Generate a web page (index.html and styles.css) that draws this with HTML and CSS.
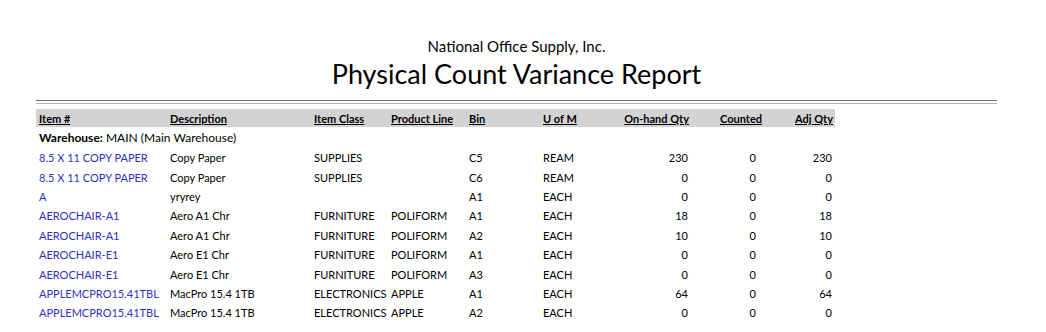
FILE: index.html
```html
<!DOCTYPE html>
<html>
<head>
<meta charset="utf-8">
<link rel="stylesheet" href="styles.css">
</head>
<body>
<div class="page">
  <div class="company">National Office Supply, Inc.</div>
  <div class="title">Physical Count Variance Report</div>
  <div class="rule1"></div>
  <div class="rule2"></div>
  <table class="report">
    <colgroup>
      <col class="c-item"><col class="c-desc"><col class="c-class"><col class="c-line"><col class="c-bin"><col class="c-uom"><col class="c-onhand"><col class="c-counted"><col class="c-adj">
    </colgroup>
    <thead>
      <tr>
        <th>Item #</th><th>Description</th><th>Item Class</th><th>Product Line</th><th>Bin</th><th>U of M</th><th class="num">On-hand Qty</th><th class="num">Counted</th><th class="num">Adj Qty</th>
      </tr>
    </thead>
    <tbody>
      <tr class="wh"><td colspan="9"><b>Warehouse:</b> MAIN (Main Warehouse)</td></tr>
      <tr><td class="link">8.5 X 11 COPY PAPER</td><td>Copy Paper</td><td>SUPPLIES</td><td></td><td>C5</td><td>REAM</td><td class="num">230</td><td class="num cnt">0</td><td class="num">230</td></tr>
      <tr><td class="link">8.5 X 11 COPY PAPER</td><td>Copy Paper</td><td>SUPPLIES</td><td></td><td>C6</td><td>REAM</td><td class="num">0</td><td class="num cnt">0</td><td class="num">0</td></tr>
      <tr><td class="link">A</td><td>yryrey</td><td></td><td></td><td>A1</td><td>EACH</td><td class="num">0</td><td class="num cnt">0</td><td class="num">0</td></tr>
      <tr><td class="link">AEROCHAIR-A1</td><td>Aero A1 Chr</td><td>FURNITURE</td><td>POLIFORM</td><td>A1</td><td>EACH</td><td class="num">18</td><td class="num cnt">0</td><td class="num">18</td></tr>
      <tr><td class="link">AEROCHAIR-A1</td><td>Aero A1 Chr</td><td>FURNITURE</td><td>POLIFORM</td><td>A2</td><td>EACH</td><td class="num">10</td><td class="num cnt">0</td><td class="num">10</td></tr>
      <tr><td class="link">AEROCHAIR-E1</td><td>Aero E1 Chr</td><td>FURNITURE</td><td>POLIFORM</td><td>A1</td><td>EACH</td><td class="num">0</td><td class="num cnt">0</td><td class="num">0</td></tr>
      <tr><td class="link">AEROCHAIR-E1</td><td>Aero E1 Chr</td><td>FURNITURE</td><td>POLIFORM</td><td>A3</td><td>EACH</td><td class="num">0</td><td class="num cnt">0</td><td class="num">0</td></tr>
      <tr><td class="link">APPLEMCPRO15.41TBL</td><td>MacPro 15.4 1TB</td><td>ELECTRONICS</td><td>APPLE</td><td>A1</td><td>EACH</td><td class="num">64</td><td class="num cnt">0</td><td class="num">64</td></tr>
      <tr><td class="link">APPLEMCPRO15.41TBL</td><td>MacPro 15.4 1TB</td><td>ELECTRONICS</td><td>APPLE</td><td>A2</td><td>EACH</td><td class="num">0</td><td class="num cnt">0</td><td class="num">0</td></tr>
    </tbody>
  </table>
</div>
</body>
</html>
```
FILE: styles.css
```css
html, body {
  margin: 0;
  padding: 0;
  background: #ffffff;
}
body {
  font-family: Lato, "Open Sans", "Liberation Sans", sans-serif;
  color: #000;
  overflow: hidden;
}
.page {
  width: 961px;
  margin-left: 36px;
  padding-top: 37px;
}
.company {
  text-align: center;
  font-size: 15px;
  line-height: 18px;
}
.title {
  text-align: center;
  font-size: 27px;
  line-height: 32px;
  margin-top: 3px;
}
.rule1 {
  margin-top: 10px;
  height: 1px;
  background: #6e6e6e;
}
.rule2 {
  margin-top: 2px;
  height: 1px;
  background: #b4b4b4;
}
.report {
  margin-top: 5px;
  border-collapse: collapse;
  table-layout: fixed;
  width: 799px;
  font-size: 11px;
}
.c-item { width: 131px; }
.c-desc { width: 144px; }
.c-class { width: 77px; }
.c-line { width: 78px; }
.c-bin { width: 74px; }
.c-uom { width: 60px; }
.c-onhand { width: 91px; }
.c-counted { width: 73px; }
.c-adj { width: 71px; }
.report th {
  background: #d3d3d3;
  font-weight: bold;
  text-decoration: underline;
  text-align: left;
  height: 18px;
  padding: 0 0 0 3px;
  white-space: nowrap;
}
.report th.num { text-align: right; padding: 0 2px 0 0; }
.report td {
  height: 19.4px;
  padding: 0 0 0 3px;
  white-space: nowrap;
  vertical-align: middle;
}
.report td.num { text-align: right; padding: 0 3px 0 0; }
.report td.cnt { padding-right: 8px; }
.report tr.wh td { height: 21px; font-size: 12px; }
.link { color: #3030c8; }
```
